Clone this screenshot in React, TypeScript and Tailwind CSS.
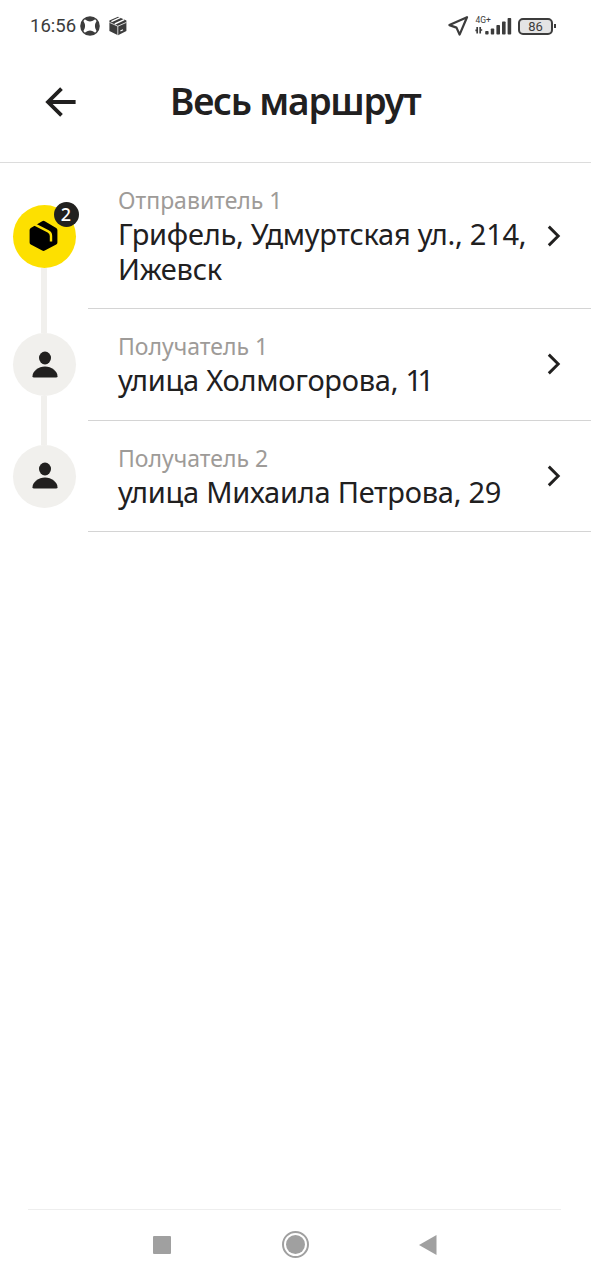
import { clsx } from "clsx";

const stops = [
  {
    label: "Отправитель 1",
    address: "Грифель, Удмуртская ул., 214, Ижевск",
    count: 2,
  },
  {
    label: "Получатель 1",
    address: "улица Холмогорова, ",
    house: "11",
  },
  {
    label: "Получатель 2",
    address: "улица Михаила Петрова, 29",
  },
];

type Stop = (typeof stops)[number];

function StatusBar() {
  return (
    <div className="flex h-[52px] items-center justify-between pr-[35px] pl-[30px] text-[#3c3c3c]">
      <div className="flex items-center">
        <span className="w-[50px] font-[Roboto] text-[18.5px] leading-none">16:56</span>
        <svg width="20" height="20" viewBox="0 0 20 20">
          <circle cx="10" cy="10" r="9.8" fill="currentColor" />
          <path
            d="M5 4.4Q10 8.4 15 4.4L15.6 5Q12.6 10 15.6 15L15 15.6Q10 11.6 5 15.6L4.4 15Q7.4 10 4.4 5Z"
            fill="#fff"
            stroke="#fff"
            strokeWidth="1.6"
          />
        </svg>
        <svg className="ml-2" width="20" height="20" viewBox="0 0 20 20">
          <path d="M10 0.8 18.4 4.6V15L10 19.2 1.4 15V4.6Z" fill="currentColor" />
          <path d="M1.4 6.4 9.8 10.2 18.4 6.4M9.8 10.2V19" stroke="#fff" strokeWidth="0.8" fill="none" />
          <path d="M3.4 5.6 12.6 1.4M6.8 8 16.2 3.6" stroke="#fff" strokeWidth="1.4" />
          <path d="M12.4 15 15 13.8" stroke="#fff" strokeWidth="1.2" />
        </svg>
      </div>

      <div className="flex items-center">
        <svg width="22" height="22" viewBox="0 0 22 22" fill="none">
          <path
            d="M19 2.2 1.4 10.1 8.5 12.6 11.6 19.6Z"
            stroke="currentColor"
            strokeWidth="2.2"
            strokeLinejoin="round"
          />
        </svg>
        <svg className="ml-[5px]" width="37" height="20" viewBox="0 0 37 20" fill="currentColor">
          <text x="0.5" y="7.3" fontFamily="Roboto" fontSize="8.5">4G+</text>
          <path d="M2.2 11V17.4M0.4 14.4 2.2 14.4" stroke="currentColor" strokeWidth="1.7" fill="none" />
          <path d="M5.2 11V17.4M7.2 14 5.2 14" stroke="currentColor" strokeWidth="1.7" fill="none" />
          <rect x="10.2" y="15" width="3.4" height="3.5" rx="0.8" />
          <rect x="15.8" y="12.5" width="3.4" height="6" rx="0.8" />
          <rect x="21.4" y="9" width="3.6" height="9.5" rx="0.8" />
          <rect x="27" y="5.5" width="3.6" height="13" rx="0.8" />
          <rect x="32.6" y="2" width="3.6" height="16.5" rx="0.8" />
        </svg>
        <div className="ml-[6px] flex h-[17px] w-[35px] items-center justify-center rounded-[5px] border-2 border-current bg-[#e4e4e4] font-[Roboto] text-[13px] leading-none">
          86
        </div>
        <span className="ml-px h-1 w-[2px] bg-current" />
      </div>
    </div>
  );
}

function BackArrow() {
  return (
    <svg width="32" height="32" viewBox="0 0 32 32" fill="none">
      <path
        d="M30.6 16H3M16.5 2.6 3 16 16.5 29.4"
        stroke="currentColor"
        strokeWidth="3.8"
      />
    </svg>
  );
}

function PackageIcon() {
  return (
    <svg width="30" height="32" viewBox="0 0 30 32">
      <path
        d="M0.6 10V22.4Q0.6 23.8 1.8 24.5L13.2 30.6Q14.5 31.3 15.8 30.6L27.2 24.5Q28.4 23.8 28.4 22.4V10Q28.4 8.6 27.2 7.9L15.8 1.2Q14.5 0.5 13.2 1.2L1.8 7.9Q0.6 8.6 0.6 10Z"
        fill="#000"
      />
      <path d="M4 3.6 19.2 11.4Q22 12.8 22 16V21.4" fill="none" stroke="#fde000" strokeWidth="2.4" />
    </svg>
  );
}

function PersonIcon() {
  return (
    <svg className="ml-[2px]" width="26" height="28" viewBox="0 0 26 28" fill="#21201f">
      <ellipse cx="13" cy="7" rx="6" ry="6.4" />
      <path d="M13 15.6C19.5 15.6 25.5 20.4 25.5 25.2Q25.5 26.6 24 26.6H2Q0.5 26.6 0.5 25.2C0.5 20.4 6.5 15.6 13 15.6Z" />
    </svg>
  );
}

function Marker({ count, first, last }: { count?: number; first: boolean; last: boolean }) {
  return (
    <div className="flex w-[88px] shrink-0 flex-col items-center">
      <span className={clsx("w-[6px] flex-1", !first && "bg-[#f1f0ed]")} />
      <div
        className={clsx(
          "relative flex size-[63px] items-center justify-center rounded-full",
          count ? "bg-[#fde000]" : "bg-[#f1f0ed]"
        )}
      >
        {count ? <PackageIcon /> : <PersonIcon />}
        {count && (
          <span className="absolute -top-[3px] right-[-3px] flex size-[25px] items-center justify-center rounded-full bg-[#21201f] text-[18px] leading-none font-medium text-white">
            {count}
          </span>
        )}
      </div>
      <span className={clsx("w-[6px] flex-1", !last && "bg-[#f1f0ed]")} />
    </div>
  );
}

function StopRow({ stop, first, last }: { stop: Stop; first: boolean; last: boolean }) {
  return (
    <button className="flex w-full text-left">
      <Marker count={stop.count} first={first} last={last} />
      <div className="flex flex-1 items-center justify-between border-b border-[#d4d4d4] pt-[20px] pr-[30px] pb-[22.3px] pl-[30px]">
        <div className="w-[412px]">
          <p className="-mb-[2px] text-[23px] leading-[35px] text-[#9e9b98]">{stop.label}</p>
          <p className="text-[29px] leading-[35px] tracking-[-0.25px]">
            {stop.address}
            {stop.house && <span className="tracking-[-4.5px]">{stop.house}</span>}
          </p>
        </div>
        <svg className="mt-[2px] shrink-0" width="14" height="22" viewBox="0 0 14 22" fill="none">
          <path d="M1.8 1.6 11.2 11 1.8 20.4" stroke="currentColor" strokeWidth="2.9" />
        </svg>
      </div>
    </button>
  );
}

function NavBar() {
  return (
    <nav className="mr-[30px] ml-7 mt-auto flex h-[71px] items-center justify-between border-t border-[#eeeeee] pr-[124px] pl-[125px] pb-px text-[#a0a0a0]">
      <span className="size-[18px] rounded-[1px] bg-current" />
      <span className="flex size-[27px] items-center justify-center rounded-full border-2 border-current">
        <span className="size-[19px] rounded-full bg-current" />
      </span>
      <svg width="18" height="20" viewBox="0 0 18 20" fill="currentColor">
        <path d="M17.5 0V20L0 10Z" />
      </svg>
    </nav>
  );
}

export default function App() {
  return (
    <div className="flex h-screen flex-col overflow-hidden bg-white font-['Noto_Sans',sans-serif] text-[#21201f]">
      <StatusBar />
      <header className="flex h-[111px] items-center border-b border-[#dcdcdc] pb-[10px] pl-[45px]">
        <BackArrow />
        <h1 className="-mt-[4px] ml-[93px] text-[37px] leading-none font-semibold tracking-[-1.2px] whitespace-nowrap">
          Весь маршрут
        </h1>
      </header>
      <main>
        {stops.map((stop, index) => (
          <StopRow key={stop.label} stop={stop} first={index === 0} last={index === stops.length - 1} />
        ))}
      </main>
      <NavBar />
    </div>
  );
}
